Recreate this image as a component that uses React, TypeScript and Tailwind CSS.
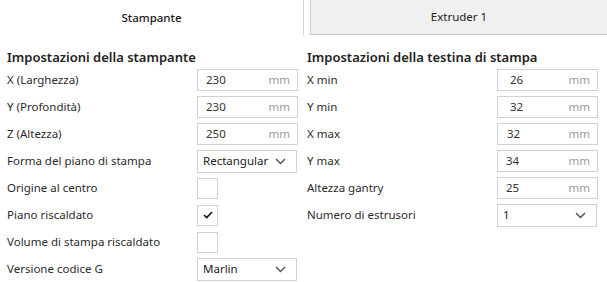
import React from "react";

type Row =
  | { kind: "num"; label: string; value: string; pad?: string }
  | { kind: "select"; label: string; value: string }
  | { kind: "check"; label: string; checked: boolean };

const printerRows: Row[] = [
  { kind: "num", label: "X (Larghezza)", value: "230" },
  { kind: "num", label: "Y (Profondità)", value: "230" },
  { kind: "num", label: "Z (Altezza)", value: "250" },
  { kind: "select", label: "Forma del piano di stampa", value: "Rectangular" },
  { kind: "check", label: "Origine al centro", checked: false },
  { kind: "check", label: "Piano riscaldato", checked: true },
  { kind: "check", label: "Volume di stampa riscaldato", checked: false },
  { kind: "select", label: "Versione codice G", value: "Marlin" },
];

const headRows: Row[] = [
  { kind: "num", label: "X min", value: "26", pad: "pl-[12px]" },
  { kind: "num", label: "Y min", value: "32", pad: "pl-[12px]" },
  { kind: "num", label: "X max", value: "32", pad: "pl-[9px]" },
  { kind: "num", label: "Y max", value: "34" },
  { kind: "num", label: "Altezza gantry", value: "25" },
  { kind: "select", label: "Numero di estrusori", value: "1" },
];

const Chevron = () => (
  <svg width="11" height="7" viewBox="0 0 11 7" className="shrink-0">
    <polyline points="1,1 5.5,5.5 10,1" fill="none" stroke="#555" strokeWidth="1.5" />
  </svg>
);

// One field of the form, the control depends on the row kind
const Control: React.FC<{ row: Row }> = ({ row }) => {
  if (row.kind === "num") {
    return (
      <div className={`w-[101px] h-[22px] border border-[#d2d2d2] flex items-center justify-between pr-[7px] ${row.pad ?? "pl-[8px]"}`}>
        <span className="text-[#333]">{row.value}</span>
        <span className="text-[#9c9c9c]">mm</span>
      </div>
    );
  }
  if (row.kind === "select") {
    return (
      <div className="w-[100px] h-[23px] border border-[#d2d2d2] flex items-center justify-between pl-[5px] pr-[10px]">
        <span className="text-[#222]">{row.value}</span>
        <Chevron />
      </div>
    );
  }
  return (
    <div className="w-[21px] h-[21px] border border-[#d2d2d2] flex items-center justify-center">
      {row.checked && (
        <svg width="10" height="8" viewBox="0 0 10 8">
          <polyline points="1,4 3.7,6.6 9,1" fill="none" stroke="#111" strokeWidth="1.6" />
        </svg>
      )}
    </div>
  );
};

const Section: React.FC<{ title: string; rows: Row[] }> = ({ title, rows }) => (
  <div className="flex flex-col">
    <div className="h-[20px] leading-[20px] text-[13px] font-semibold text-[#222] mb-[2px]">{title}</div>
    <div className="flex flex-col gap-[5px]">
      {rows.map((r) => (
        <div key={r.label} className="h-[22px] flex items-center justify-between">
          <span className="text-[#2b2b2b]">{r.label}</span>
          <div className="w-[101px] flex items-center">
            <Control row={r} />
          </div>
        </div>
      ))}
    </div>
  </div>
);

export default function App() {
  return (
    <div className="w-[607px] h-[282px] bg-white overflow-hidden text-[11.5px]" style={{ fontFamily: '"Noto Sans", sans-serif' }}>
      {/* Tabs */}
      <div className="flex h-[36px]">
        <div className="w-[303px] flex items-center justify-center text-[11.5px] font-medium text-[#1a1a1a]">Stampante</div>
        <div className="flex-1 border-l border-[#d6d6d6] pl-[6px]">
          <div className="h-[35px] bg-[#f0f0f0] border-l border-b border-[#c9c9c9] flex items-center justify-center text-[#222]">
            Extruder 1
          </div>
        </div>
      </div>

      {/* Settings */}
      <div className="grid grid-cols-[291px_291px] gap-[9px] pl-[7px] pt-[11px]">
        <Section title="Impostazioni della stampante" rows={printerRows} />
        <Section title="Impostazioni della testina di stampa" rows={headRows} />
      </div>
    </div>
  );
}
